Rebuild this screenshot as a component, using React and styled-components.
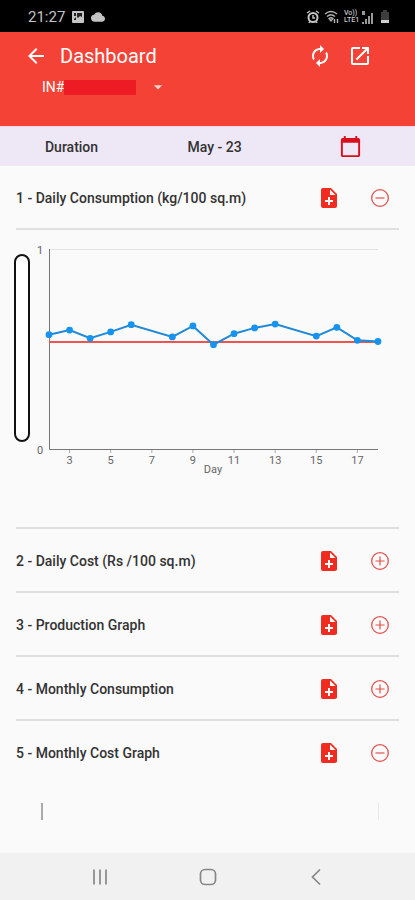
import React from 'react';
import styled, { createGlobalStyle } from 'styled-components';
import {
  MdArrowBack,
  MdArrowDropDown,
  MdAutorenew,
  MdCalendarToday,
  MdCloud,
  MdNoteAdd,
  MdOpenInNew,
} from 'react-icons/md';

const GlobalStyle = createGlobalStyle`
  * {
    box-sizing: border-box;
  }

  body {
    margin: 0;
    background: #fafafa;
    font-family: Roboto, 'Liberation Sans', sans-serif;
    color: #333;
  }
`;

const Page = styled.div`
  display: flex;
  flex-direction: column;
  min-height: 100vh;
`;

const StatusBar = styled.div`
  display: flex;
  align-items: center;
  justify-content: space-between;
  height: 32px;
  padding: 2px 24px 0 28px;
  background: #000;
  color: #c4c4c4;
  font-size: 15px;
`;

const StatusGroup = styled.div`
  display: flex;
  align-items: center;
  gap: ${(props) => props.$gap}px;
`;

const NetworkLabel = styled.div`
  width: 14px;
  font-size: 7px;
  font-weight: 500;
  line-height: 7px;
`;

const Header = styled.header`
  height: 95px;
  padding: 8px 43px 0 24px;
  background: #f44336;
  border-bottom: 1px solid #f8d5dc;
  color: #fff;
`;

const HeaderRow = styled.div`
  display: flex;
  align-items: center;
  height: 32px;
`;

const Title = styled.h1`
  flex: 1;
  margin: 0 0 0 12px;
  font-size: 20px;
  font-weight: 400;
`;

const IconButton = styled.button`
  display: flex;
  align-items: center;
  justify-content: center;
  width: 24px;
  height: 24px;
  margin: 0 0 0 ${(props) => props.$gap || 0}px;
  padding: 0;
  border: 0;
  background: none;
  color: ${(props) => props.$color || '#fff'};
  cursor: pointer;
`;

const UnitButton = styled.button`
  display: flex;
  align-items: center;
  height: 30px;
  margin-left: 18px;
  padding: 0;
  border: 0;
  background: none;
  color: #fff;
  font: 14px Roboto, sans-serif;
  cursor: pointer;

  svg {
    margin-left: 12px;
    color: #fbd3cf;
  }
`;

const Redacted = styled.span`
  width: 72px;
  height: 15px;
  background: #ed1c24;
`;

const DurationBar = styled.div`
  display: grid;
  grid-template-columns: 10fr 10fr 9fr;
  align-items: center;
  justify-items: center;
  height: 39px;
  background: #ede7f6;
  font-size: 14px;
  font-weight: 500;
`;

const Sections = styled.main`
  padding: 0 16px;
`;

const SectionRow = styled.div`
  display: flex;
  align-items: center;
  height: 64px;
  padding: 2px 7px 0 0;
  border-bottom: 2px solid ${(props) => (props.$last ? 'transparent' : '#e0e0e0')};
`;

const SectionTitle = styled.h2`
  flex: 1;
  margin: 0;
  font-size: 14px;
  font-weight: 500;
`;

const ChartPanel = styled.div`
  display: flex;
  align-items: flex-start;
  height: 299px;
  padding-top: 10px;
  border-bottom: 2px solid #e0e0e0;
`;

const AxisPill = styled.div`
  flex: none;
  width: 16px;
  height: 188px;
  margin: 14px 0 0 -2px;
  border: 2px solid #111;
  border-radius: 8px;
  background: #fff;
`;

const ChartSvg = styled.svg`
  flex: 1;
  min-width: 0;
  overflow: visible;

  text {
    fill: #666;
    font-size: 11px;
    text-anchor: middle;
  }
`;

const NextChart = styled.div`
  display: flex;
  justify-content: space-between;
  height: 17px;
  margin: 18px 20px 0 25px;
  border-left: 2px solid #aaa;
  border-right: 1px solid #eaeaea;
`;

const NavBar = styled.nav`
  display: grid;
  grid-template-columns: 1fr 1fr 1fr;
  align-items: center;
  justify-items: center;
  height: 47px;
  margin-top: auto;
  padding: 0 45px 0 46px;
  background: #f1f1f1;
`;

const sections = [
  { name: '1 - Daily Consumption (kg/100 sq.m)', open: true, chart: true },
  { name: '2 - Daily Cost (Rs /100 sq.m)' },
  { name: '3 - Production Graph' },
  { name: '4 - Monthly Consumption' },
  { name: '5 - Monthly Cost Graph', open: true },
];

const readings = [
  [2, 0.574],
  [3, 0.597],
  [4, 0.556],
  [5, 0.588],
  [6, 0.624],
  [8, 0.563],
  [9, 0.618],
  [10, 0.524],
  [11, 0.579],
  [12, 0.608],
  [13, 0.627],
  [15, 0.567],
  [16, 0.611],
  [17, 0.546],
  [18, 0.54],
];

const target = 0.537;
const ticks = [3, 5, 7, 9, 11, 13, 15, 17];

const xOf = (day) => 19 + (day - 2) * 20.56;
const yOf = (value) => 209.5 - value * 200;

const ToggleIcon = ({ open }) => (
  <svg width='20' height='20' viewBox='0 0 20 20' fill='none' stroke='#e5504d'>
    <circle cx='10' cy='10' r='8.3' strokeWidth='1.3' />
    <path d={open ? 'M5.5 10h9' : 'M5.5 10h9M10 5.5v9'} strokeWidth='1.2' />
  </svg>
);

const DailyChart = () => (
  <ChartSvg viewBox='0 0 369 240' role='img' aria-label='Daily consumption'>
    <path d='M19 9.5H348' stroke='#e2e2e2' />
    <path d='M19.5 9V209.5H348' fill='none' stroke='#777' />
    <text x='10' y='14'>
      1
    </text>
    <text x='10' y='214'>
      0
    </text>
    {ticks.map((day) => (
      <g key={day}>
        <path d={`M${xOf(day)} 210v3`} stroke='#aaa' />
        <text x={xOf(day)} y='224'>
          {day}
        </text>
      </g>
    ))}
    <text x='183' y='233'>
      Day
    </text>
    <path d={`M19 ${yOf(target)}H348`} stroke='#ef5350' strokeWidth='2' />
    <polyline
      points={readings.map(([day, v]) => `${xOf(day)},${yOf(v)}`).join(' ')}
      fill='none'
      stroke='#2189d6'
      strokeWidth='2'
    />
    {readings.map(([day, v]) => (
      <circle key={day} cx={xOf(day)} cy={yOf(v)} r='3.4' fill='#1693ef' />
    ))}
  </ChartSvg>
);

const Section = ({ section, last }) => (
  <>
    <SectionRow $last={last}>
      <SectionTitle>{section.name}</SectionTitle>
      <IconButton $color='#f02c20' aria-label='Export'>
        <MdNoteAdd size={24} />
      </IconButton>
      <IconButton $gap={27} aria-label='Toggle'>
        <ToggleIcon open={section.open} />
      </IconButton>
    </SectionRow>
    {section.chart && (
      <ChartPanel>
        <AxisPill />
        <DailyChart />
      </ChartPanel>
    )}
  </>
);

const App = () => {
  return (
    <Page>
      <GlobalStyle />
      <StatusBar>
        <StatusGroup $gap={6}>
          <span>21:27</span>
          <svg width='14' height='14' viewBox='0 0 14 14'>
            <rect x='1' y='1' width='12' height='12' rx='1' fill='#c4c4c4' />
            <path d='M3 3h2v3H3zM6 3h5v4L9 6 7 8 6 7zM3 9l2-2v3H3z' fill='#222' />
          </svg>
          <MdCloud size={14} />
        </StatusGroup>
        <StatusGroup $gap={4}>
          <svg width='14' height='14' viewBox='0 0 14 14' fill='none' stroke='#c4c4c4'>
            <circle cx='7' cy='7.5' r='4.5' strokeWidth='2' />
            <path d='M7 5v3h2M1 3l3-2M13 3l-3-2M3 13l1-2M11 13l-1-2' strokeWidth='1.4' />
          </svg>
          <svg width='16' height='14' viewBox='0 0 16 14' fill='none' stroke='#b4b4b4'>
            <path d='M1 4q6-5 12 0M3 6.5q4-3.5 8 0M5 8.5q2-1.5 4 0L7 11z' strokeWidth='1.3' />
            <path d='M10.5 9v4M13.5 13V9' strokeWidth='1.4' />
          </svg>
          <NetworkLabel>
            Vo))
            <br />
            LTE1
          </NetworkLabel>
          <svg width='11' height='13' viewBox='0 0 11 13' fill='#999'>
            <path d='M0 0h3v4H0zM0 11h2v2H0zM3 8h2v5H3zM6 5h2v8H6zM9 2h2v11H9z' />
          </svg>
          <svg width='14' height='14' viewBox='0 0 14 14'>
            <path d='M4 2h2V0h4v2h2v8H4z' fill='#3d3d3d' />
            <path d='M4 10h8v3H4z' fill='#d0d0d0' />
          </svg>
        </StatusGroup>
      </StatusBar>

      <Header>
        <HeaderRow>
          <IconButton aria-label='Back'>
            <MdArrowBack size={24} />
          </IconButton>
          <Title>Dashboard</Title>
          <IconButton aria-label='Refresh'>
            <MdAutorenew size={24} />
          </IconButton>
          <IconButton $gap={16} aria-label='Open'>
            <MdOpenInNew size={24} />
          </IconButton>
        </HeaderRow>
        <UnitButton>
          IN#
          <Redacted />
          <MdArrowDropDown size={20} />
        </UnitButton>
      </Header>

      <DurationBar>
        <span>Duration</span>
        <span>May - 23</span>
        <IconButton $color='#d9101c' aria-label='Pick month'>
          <MdCalendarToday size={23} />
        </IconButton>
      </DurationBar>

      <Sections>
        {sections.map((section, i) => (
          <Section key={section.name} section={section} last={i === sections.length - 1} />
        ))}
        <NextChart />
      </Sections>

      <NavBar>
        <IconButton aria-label='Recent apps'>
          <svg width='18' height='18' viewBox='0 0 18 18' stroke='#888' strokeWidth='1.7'>
            <path d='M3 1.5v15M9 1.5v15M15 1.5v15' />
          </svg>
        </IconButton>
        <IconButton aria-label='Home'>
          <svg width='18' height='18' viewBox='0 0 18 18' fill='none' stroke='#888'>
            <rect x='1.5' y='1.5' width='15' height='15' rx='4.5' strokeWidth='1.7' />
          </svg>
        </IconButton>
        <IconButton aria-label='Back to previous app'>
          <svg width='18' height='18' viewBox='0 0 18 18' fill='none' stroke='#888'>
            <path d='M13 1.5L5.5 9L13 16.5' strokeWidth='1.7' />
          </svg>
        </IconButton>
      </NavBar>
    </Page>
  );
};

export default App;
